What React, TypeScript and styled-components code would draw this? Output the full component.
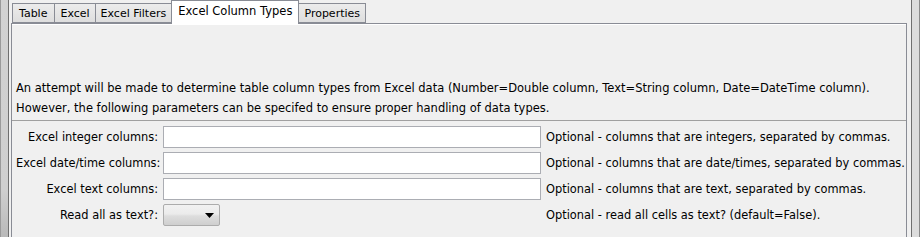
import styled, { createGlobalStyle } from "styled-components";

const GlobalStyle = createGlobalStyle`
    html, body {
        margin: 0;
        padding: 0;
        background: #f0f0f0;
    }
    body {
        font-family: "DejaVu Sans", "Liberation Sans", sans-serif;
        font-size: 11.4px;
        color: #000;
    }
`;

const Window = styled.div`
    display: flex;
    width: 920px;
    height: 237px;
    overflow: hidden;
    background: #f0f0f0;
`;
const LeftEdge = styled.div`
    width: 7px;
    border-left: 1px solid #9a9a9a;
    border-right: 1px solid #6f6f6f;
    background: linear-gradient(to bottom, #d2d2d2 0%, #cfcfcf 80%, #b9b9b9 100%);
    margin-right: 2px;
`;
const RightEdge = styled.div`
    width: 7px;
    border-left: 1px solid #6f6f6f;
    border-right: 1px solid #8a8a8a;
    background: #dcdcdc;
    margin-left: 4px;
`;
const Main = styled.div`
    display: flex;
    flex-direction: column;
    width: 896px;
`;
const TabBar = styled.div`
    display: flex;
    align-items: flex-end;
    height: 23px;
    padding-left: 1px;
    position: relative;
    z-index: 1;
`;
const Tab = styled.div<{ $active?: boolean }>`
    box-sizing: border-box;
    height: ${(p) => (p.$active ? "24px" : "20px")};
    margin-bottom: ${(p) => (p.$active ? "-1px" : "0")};
    padding: ${(p) => (p.$active ? "3px 6px 0" : "3px 5px 0")};
    border: 1px solid #898c95;
    border-bottom: ${(p) => (p.$active ? "none" : "1px solid #898c95")};
    margin-left: -1px;
    background: ${(p) =>
        p.$active ? "#ffffff" : "linear-gradient(to bottom, #ececec 0%, #dedede 100%)"};
    font-size: ${(p) => (p.$active ? "11.5px" : "11px")};
    white-space: nowrap;
    &:first-child {
        margin-left: 0;
        padding: 3px 7px 0 6px;
    }
`;
const Panel = styled.div`
    flex: 1;
    border: 1px solid #898c95;
    border-bottom: none;
    background: #f0f0f0;
    box-shadow: inset 0 1px 0 #ffffff;
    padding: 54px 0 0 4px;
`;
const Intro = styled.p`
    margin: 0;
    line-height: 20px;
    white-space: nowrap;
    font-size: 11.5px;
`;
const Form = styled.div`
    margin: 2px 0 0 -4px;
    padding: 5px 0 0 4px;
    border-top: 1px solid #a0a0a0;
    display: grid;
    grid-template-columns: 142px 378px auto;
    grid-auto-rows: 22px;
    column-gap: 5px;
    row-gap: 4px;
    align-items: center;
`;
const Label = styled.label`
    text-align: right;
    white-space: nowrap;
`;
const Field = styled.input`
    box-sizing: border-box;
    width: 100%;
    height: 22px;
    margin: 0;
    border: 1px solid #abadb3;
    background: #ffffff;
    outline: none;
    font: inherit;
`;
const Combo = styled.div`
    box-sizing: border-box;
    width: 57px;
    height: 22px;
    border: 1px solid #acacac;
    border-radius: 2px;
    background: linear-gradient(to bottom, #f2f2f2 0%, #ebebeb 45%, #dddddd 55%, #cfcfcf 100%);
    display: flex;
    align-items: center;
    justify-content: flex-end;
    padding-right: 5px;
`;
const Hint = styled.span`
    white-space: nowrap;
`;

const rows = [
    { label: "Excel integer columns:", hint: "Optional - columns that are integers, separated by commas." },
    { label: "Excel date/time columns:", hint: "Optional - columns that are date/times, separated by commas." },
    { label: "Excel text columns:", hint: "Optional - columns that are text, separated by commas." },
];

function App() {
    return (
        <>
            <GlobalStyle />
            <Window>
                <LeftEdge />
                <Main>
                    <TabBar>
                        <Tab>Table</Tab>
                        <Tab>Excel</Tab>
                        <Tab>Excel Filters</Tab>
                        <Tab $active>Excel Column Types</Tab>
                        <Tab>Properties</Tab>
                    </TabBar>
                    <Panel>
                        <Intro>
                            An attempt will be made to determine table column types from Excel data (Number=Double column, Text=String column, Date=DateTime column).
                            <br />
                            However, the following parameters can be specifed to ensure proper handling of data types.
                        </Intro>
                        <Form>
                            {rows.map((r) => (
                                <>
                                    <Label key={r.label}>{r.label}</Label>
                                    <Field />
                                    <Hint>{r.hint}</Hint>
                                </>
                            ))}
                            <Label>Read all as text?:</Label>
                            <Combo>
                                <svg width="9" height="5" viewBox="0 0 9 5">
                                    <path d="M0 0h9L4.5 5z" fill="#000" />
                                </svg>
                            </Combo>
                            <Hint>Optional - read all cells as text? (default=False).</Hint>
                        </Form>
                    </Panel>
                </Main>
                <RightEdge />
            </Window>
        </>
    );
}
export default App;
